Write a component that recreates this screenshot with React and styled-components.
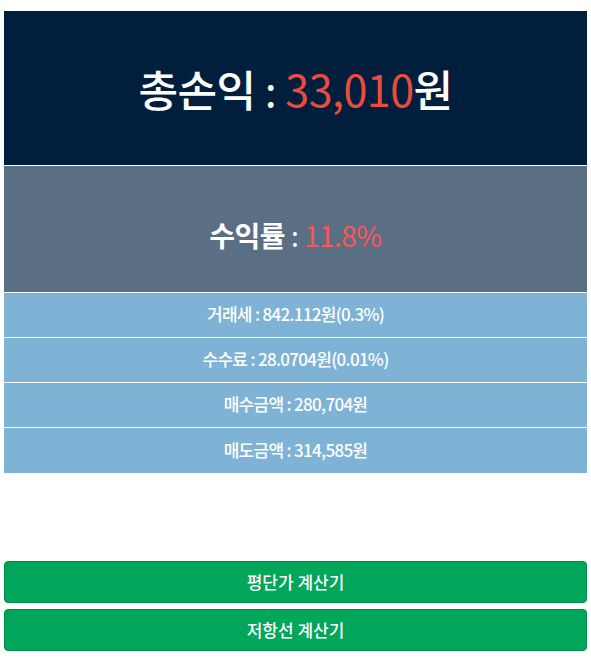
import styled, { createGlobalStyle } from "styled-components";

const GlobalStyle = createGlobalStyle`
  body {
    margin: 0;
    font-family: "Noto Sans CJK KR", "Noto Sans", sans-serif;
    background: #fff;
  }
`;

const details = [
  { label: "거래세", value: "842.112원(0.3%)" },
  { label: "수수료", value: "28.0704원(0.01%)" },
  { label: "매수금액", value: "280,704원" },
  { label: "매도금액", value: "314,585원" },
];

const App = () => {
  return (
    <Page>
      <GlobalStyle />
      <Summary>
        <TotalBox>
          <Headline size="43px" weight={500}>
            <strong>총손익</strong> : <Red color="#e74c3c">33,010</Red><strong>원</strong>
          </Headline>
        </TotalBox>
        <RateBox>
          <Headline size="28px" weight={700}>
            <strong>수익률</strong> : <Red color="#ff5555">11.8%</Red>
          </Headline>
        </RateBox>
        {details.map((d) => (
          <DetailRow key={d.label}>
            {d.label} : {d.value}
          </DetailRow>
        ))}
      </Summary>
      <Buttons>
        <GreenButton>평단가 계산기</GreenButton>
        <GreenButton>저항선 계산기</GreenButton>
      </Buttons>
    </Page>
  );
};

export default App;

const Page = styled.div`
  padding: 11px 4px;
  display: flex;
  flex-direction: column;
`;

const Summary = styled.div`
  display: flex;
  flex-direction: column;
`;

const TotalBox = styled.div`
  height: 155px;
  background-color: #011e3c;
  border-bottom: 1px solid #fff;
  display: flex;
  align-items: center;
  justify-content: center;
  box-sizing: border-box;
`;

const RateBox = styled.div`
  height: 127px;
  background-color: #5a6e84;
  border-bottom: 1px solid #fff;
  display: flex;
  align-items: center;
  justify-content: center;
  box-sizing: border-box;
  padding-top: 12px;
`;

const Headline = styled.div`
  color: #fff;
  font-size: ${(props) => props.size};
  font-weight: 400;
  letter-spacing: -0.5px;

  strong {
    font-weight: ${(props) => props.weight};
  }
`;

const Red = styled.span`
  color: ${(props) => props.color};
  font-weight: 400;
`;

const DetailRow = styled.div`
  height: 45px;
  background-color: #7fb3d5;
  border-bottom: 1px solid #fff;
  box-sizing: border-box;
  display: flex;
  align-items: center;
  justify-content: center;
  padding-bottom: 3px;
  color: #fff;
  font-size: 17px;
  font-weight: 500;
  letter-spacing: -0.7px;

  &:last-child {
    border-bottom: none;
  }
`;

const Buttons = styled.div`
  margin-top: 88px;
  display: flex;
  flex-direction: column;
  gap: 6px;
`;

const GreenButton = styled.button`
  height: 42px;
  width: 100%;
  padding-bottom: 3px;
  background-color: #00a65a;
  border: 1px solid #008d4c;
  border-radius: 4px;
  color: #fff;
  font-family: "Noto Sans CJK KR", "Noto Sans", sans-serif;
  font-size: 17px;
  font-weight: 500;
  cursor: pointer;
`;
